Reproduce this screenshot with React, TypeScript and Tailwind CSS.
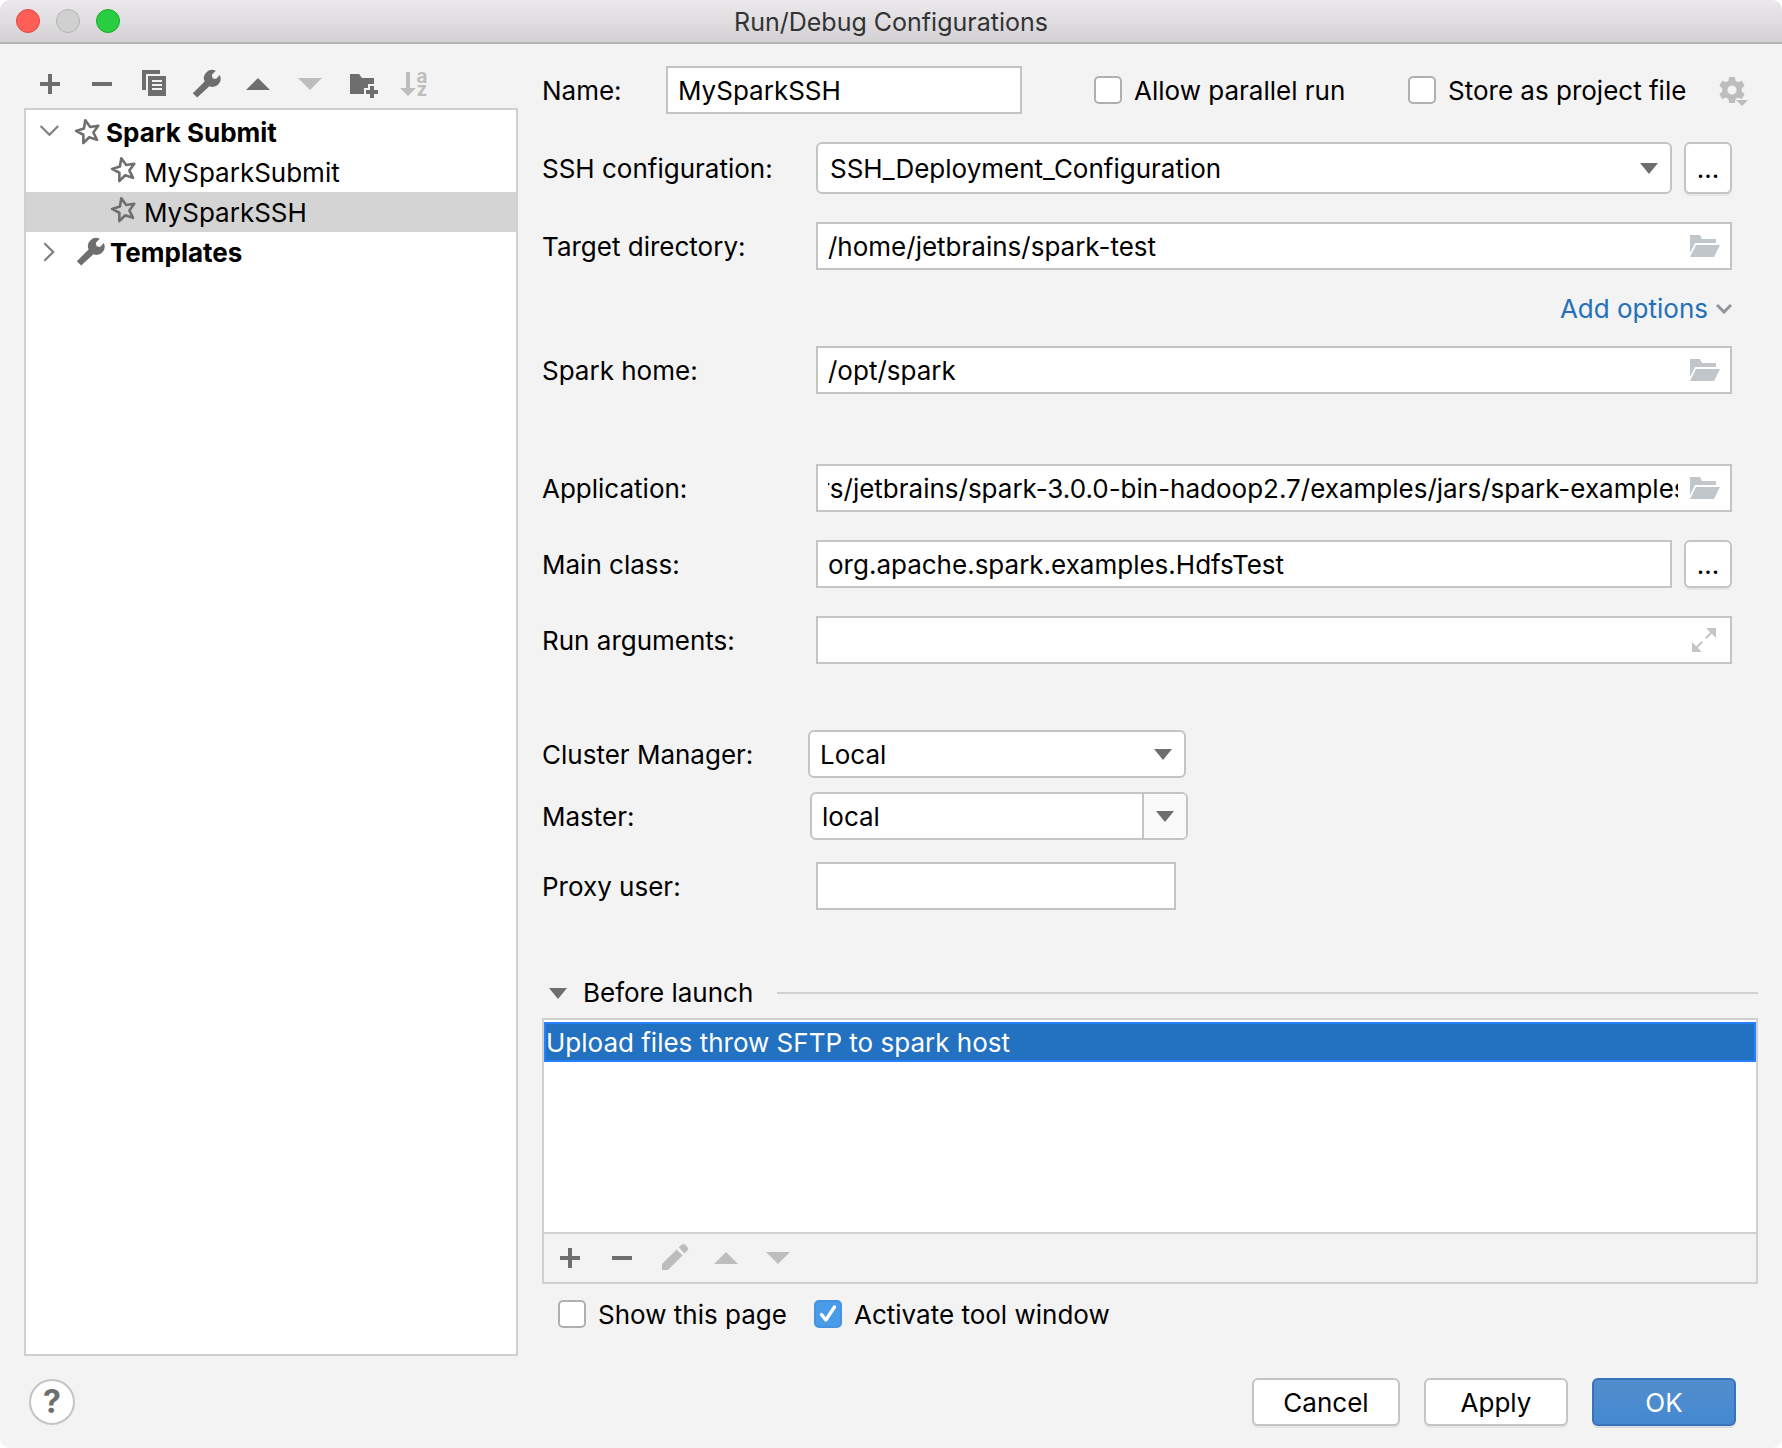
import { useEffect, useRef, useState } from 'react'
import type { ReactNode } from 'react'

interface Config {
  name: string
  ssh: string
  targetDir: string
  sparkHome: string
  application: string
  mainClass: string
  args: string
  manager: string
  master: string
  proxyUser: string
}

const DEFAULT_CONFIG: Config = {
  name: 'MySparkSSH',
  ssh: 'SSH_Deployment_Configuration',
  targetDir: '/home/jetbrains/spark-test',
  sparkHome: '/opt/spark',
  application: 'rs/jetbrains/spark-3.0.0-bin-hadoop2.7/examples/jars/spark-examples_2.12-3.0.0.jar',
  mainClass: 'org.apache.spark.examples.HdfsTest',
  args: '',
  manager: 'Local',
  master: 'local',
  proxyUser: '',
}

// 16-unit icon grid drawn at 32px
const ICONS: Record<string, ReactNode> = {
  add: <path d="M7 3h2v4h4v2H9v4H7V9H3V7h4z" />,
  remove: <path d="M3 7h10v2H3z" />,
  copy: (
    <>
      <path d="M2 1h9v2H4v8H2z" />
      <path fillRule="evenodd" d="M5 4h9v10H5zM7 6v1h5V6zM7 8v1h5V8zM7 10v1h5v-1z" />
    </>
  ),
  wrench: <path d="M12.9 1.4 10.9 3.4 11.3 5.1 13 5.5 14.9 3.5A4.1 4.1 0 0 1 9.7 9.1L3.6 14.8 1.4 12.6 7.3 6.7A4.1 4.1 0 0 1 12.9 1.4z" />,
  up: <path d="M2 11h12L8 5z" />,
  down: <path d="M2 5h12l-6 6z" />,
  folderAdd: (
    <>
      <path d="M2 3h4.5L8 5h6v3h-3v2H9v3H2z" />
      <path d="M12 9h2v2h2v2h-2v2h-2v-2h-2v-2h2z" />
    </>
  ),
  sort: (
    <>
      <path d="M4 2h2v8h3l-4 4-4-4h3z" />
      <text fontSize="9.4" fontWeight="700">
        <tspan x="9.2" y="7.3">a</tspan>
        <tspan x="9.3" y="14">z</tspan>
      </text>
    </>
  ),
  pencil: (
    <>
      <path d="M2 14v-3l7.3-7.3 3 3L5 14z" />
      <path d="M10.4 2.8l1.4-1.4a1.3 1.3 0 0 1 1.8 0l1.1 1.1a1.3 1.3 0 0 1 0 1.8l-1.4 1.4z" />
    </>
  ),
  star: (
    <path
      fill="none" stroke="currentColor" strokeWidth="1.3" strokeLinejoin="round" transform="rotate(-4 8 8)"
      d="M7.06 2.07 9.25 5.6 13.35 5.28 10.66 8.42 12.24 12.24 8.42 10.66 5.28 13.35 5.6 9.22 2.07 7.06 6.1 6.1z"
    />
  ),
  expanded: <path fill="none" stroke="currentColor" strokeWidth="1.1" d="M3.3 5l4.4 4.4L12.1 5" />,
  collapsed: <path fill="none" stroke="currentColor" strokeWidth="1.1" d="M5.2 3.6 9.6 8l-4.4 4.4" />,
  gear: (
    <>
      <path
        fillRule="evenodd"
        d="M6.6 1.5h2.8l.4 1.9 1.2.7 1.9-.7 1.4 2.4L12.9 7.2v1.5l1.4 1.4-1.4 2.4-1.9-.7-1.2.7-.4 2H6.6l-.4-2-1.2-.7-1.9.7-1.4-2.4 1.4-1.4V7.2L1.7 5.8l1.4-2.4 1.9.7 1.2-.7zM8 5.7a2.3 2.3 0 1 0 0 4.6 2.3 2.3 0 0 0 0-4.6z"
      />
      <path d="M10 13h6l-3 3z" />
    </>
  ),
}

function Icon({ name, className = 'text-[#6e6e6e]' }: { name: string; className?: string }) {
  return (
    <svg viewBox="0 0 16 16" fill="currentColor" className={`size-8 shrink-0 overflow-visible ${className}`} aria-hidden="true">
      {ICONS[name]}
    </svg>
  )
}

function ToolButton({ icon, label, disabled }: { icon: string; label: string; disabled?: boolean }) {
  return (
    <button type="button" aria-label={label} disabled={disabled}>
      <Icon name={icon} className={disabled ? 'text-[#bdbdbd]' : 'text-[#6e6e6e]'} />
    </button>
  )
}

function Triangle() {
  return (
    <svg viewBox="0 0 18 11" fill="#6e6e6e" className="w-[18px] shrink-0" aria-hidden="true">
      <path d="M0 0h18L9 11z" />
    </svg>
  )
}

function FolderIcon() {
  return (
    <svg viewBox="0 0 30 22" fill="#c1c6ca" className="w-[30px]" aria-hidden="true">
      <path d="M0 0h10l2 4h14v4H5L0 18z" />
      <path d="M6 10h24l-6 12H0z" />
    </svg>
  )
}

function ExpandIcon() {
  return (
    <svg viewBox="0 0 24 24" fill="#c1c6ca" stroke="#c1c6ca" className="mr-1 w-6" aria-hidden="true">
      <path stroke="none" d="M14 0h10v10zM0 14v10h10z" />
      <path strokeWidth="2" d="M13.7 10.3 20 4M10.3 13.7 4 20" />
    </svg>
  )
}

function Checkbox({ label, checked, onChange }: { label: string; checked: boolean; onChange: (v: boolean) => void }) {
  return (
    <label className="flex items-center gap-3 whitespace-nowrap">
      <span className="relative size-7 shrink-0">
        <input
          type="checkbox"
          checked={checked}
          onChange={e => onChange(e.target.checked)}
          className="block size-7 appearance-none rounded-[5px] border-2 border-[#b0b0b0] bg-white checked:border-[#4593e0] checked:bg-[#4a9be8]"
        />
        {checked && (
          <svg viewBox="0 0 28 28" fill="none" stroke="#fff" strokeWidth="3.4" strokeLinecap="round" strokeLinejoin="round"
            className="pointer-events-none absolute inset-0" aria-hidden="true">
            <path d="M7.5 14.5l4.3 5.5L20.5 7" />
          </svg>
        )}
      </span>
      <span className="pt-[2px]">{label}</span>
    </label>
  )
}

function Row({ id, label, labelWidth = 'w-[274px]', className = '', children }: {
  id: string; label: string; labelWidth?: string; className?: string; children: ReactNode
}) {
  return (
    <div className={`flex items-center pr-[26px] ${className}`}>
      <label htmlFor={id} className={`shrink-0 pt-[2px] whitespace-nowrap ${labelWidth}`}>{label}</label>
      {children}
    </div>
  )
}

const boxClass = 'h-12 border-2 border-[#c4c4c4] bg-white px-[10px] outline-none'
const buttonClass = 'h-12 rounded-md border-2 border-[#c4c4c4] bg-white pt-[2px] shadow-[0_2px_0_#e6e6e6]'

export default function App() {
  const [config, setConfig] = useState<Config>(DEFAULT_CONFIG)
  const [parallel, setParallel] = useState(false)
  const [store, setStore] = useState(false)
  const [showPage, setShowPage] = useState(false)
  const [activate, setActivate] = useState(true)
  const appRef = useRef<HTMLInputElement>(null)

  const set = (key: keyof Config) => (e: { target: { value: string } }) =>
    setConfig(c => ({ ...c, [key]: e.target.value }))

  // Long jar path is kept scrolled past its first letter
  useEffect(() => {
    if (appRef.current) appRef.current.scrollLeft = 8
  }, [])

  const pathField = (id: string, key: keyof Config, icon: ReactNode, label: string) => (
    <div className={`flex min-w-0 flex-1 items-center gap-3 ${boxClass}`}>
      <input id={id} ref={key === 'application' ? appRef : undefined} type="text" value={config[key]} onChange={set(key)}
        className="min-w-0 flex-1 pt-[2px] outline-none" />
      <button type="button" aria-label={label}>{icon}</button>
    </div>
  )

  return (
    <div className="min-h-screen bg-white font-['Inter','Liberation_Sans',sans-serif] text-[26px] leading-8 text-black">
      <div className="flex min-h-screen flex-col overflow-hidden rounded-[10px] bg-[#f3f3f3]">
        {/* Title bar */}
        <header className="relative flex h-11 shrink-0 items-center justify-center border-b-2 border-[#b4b2b4] bg-linear-to-b from-[#ebe9ec] to-[#d3d1d4]">
          <div className="absolute left-4 flex gap-4">
            <button type="button" aria-label="Close" className="size-6 rounded-full border border-[#e2463f] bg-[#ff5f57]" />
            <button type="button" aria-label="Minimize" className="size-6 rounded-full border border-[#b5b4b5] bg-[#d1d0d1]" />
            <button type="button" aria-label="Zoom" className="size-6 rounded-full border border-[#1aab29] bg-[#28cd41]" />
          </div>
          <h1 className="pt-[2px] text-[25px] text-[#333]">Run/Debug Configurations</h1>
        </header>

        <div className="flex flex-1 px-6">
          {/* Configuration tree */}
          <aside className="flex w-[494px] shrink-0 flex-col pt-6">
            <div className="flex gap-5 pb-2 pl-[10px]">
              <ToolButton icon="add" label="Add" />
              <ToolButton icon="remove" label="Remove" />
              <ToolButton icon="copy" label="Copy" />
              <ToolButton icon="wrench" label="Edit templates" />
              <ToolButton icon="up" label="Move up" />
              <ToolButton icon="down" label="Move down" disabled />
              <ToolButton icon="folderAdd" label="New folder" />
              <ToolButton icon="sort" label="Sort" disabled />
            </div>
            <ul className="flex-1 border-2 border-[#d0d0d0] bg-white pt-[2px]">
              <li className="flex h-10 items-center gap-[2px] pl-2 font-bold">
                <Icon name="expanded" className="mr-1 text-[#7f7f7f]" />
                <Icon name="star" />
                <span className="pt-[2px]">Spark Submit</span>
              </li>
              <li className="flex h-10 items-center gap-1 pl-[82px]">
                <Icon name="star" className="mb-1 text-[#6e6e6e]" />
                <span className="pt-[2px]">MySparkSubmit</span>
              </li>
              <li className="flex h-10 items-center gap-1 bg-[#d4d4d4] pl-[82px]">
                <Icon name="star" className="mb-1 text-[#6e6e6e]" />
                <span className="pt-[2px]">MySparkSSH</span>
              </li>
              <li className="flex h-10 items-center gap-1 pl-2 font-bold">
                <Icon name="collapsed" className="mr-1 text-[#7f7f7f]" />
                <Icon name="wrench" />
                <span className="pt-[2px]">Templates</span>
              </li>
            </ul>
          </aside>

          <main className="ml-6 flex min-w-0 flex-1 flex-col pt-[22px]">
            <div className="flex items-center pr-[10px]">
              <label htmlFor="name" className="w-[124px] shrink-0 pt-[2px]">Name:</label>
              <input id="name" type="text" value={config.name} onChange={set('name')} className={`w-[356px] ${boxClass}`} />
              <div className="ml-auto flex items-center">
                <div className="w-[314px]"><Checkbox label="Allow parallel run" checked={parallel} onChange={setParallel} /></div>
                <div className="w-[308px]"><Checkbox label="Store as project file" checked={store} onChange={setStore} /></div>
                <button type="button" aria-label="Storage settings"><Icon name="gear" className="text-[#bdbdbd]" /></button>
              </div>
            </div>

            <Row id="ssh" label="SSH configuration:" className="mt-7">
              <div className="relative min-w-0 flex-1">
                <select id="ssh" value={config.ssh} onChange={set('ssh')}
                  className="h-[52px] w-full appearance-none rounded-md border-2 border-[#c4c4c4] bg-white px-3 pt-[2px] outline-none">
                  <option>SSH_Deployment_Configuration</option>
                </select>
                <span className="pointer-events-none absolute inset-y-0 right-[14px] flex items-center"><Triangle /></span>
              </div>
              <button type="button" aria-label="Edit SSH configurations" className="ml-3 h-[52px] w-12 rounded-md border-2 border-[#c4c4c4] bg-white pt-[2px] shadow-[0_2px_0_#e6e6e6]">...</button>
            </Row>

            <Row id="target" label="Target directory:" className="mt-7">
              {pathField('target', 'targetDir', <FolderIcon />, 'Browse target directory')}
            </Row>

            <div className="flex h-[76px] items-center justify-end pt-[2px] pr-[26px]">
              <button type="button" className="flex items-center gap-2 text-[#2470b8]">
                Add options
                <svg viewBox="0 0 16 10" fill="none" stroke="#8f979d" strokeWidth="3" className="w-4" aria-hidden="true">
                  <path d="M1 1l7 7 7-7" />
                </svg>
              </button>
            </div>

            <Row id="home" label="Spark home:">
              {pathField('home', 'sparkHome', <FolderIcon />, 'Browse Spark home')}
            </Row>

            <Row id="application" label="Application:" className="mt-[70px]">
              {pathField('application', 'application', <FolderIcon />, 'Browse application')}
            </Row>

            <Row id="main-class" label="Main class:" className="mt-7">
              <input id="main-class" type="text" value={config.mainClass} onChange={set('mainClass')} className={`min-w-0 flex-1 ${boxClass}`} />
              <button type="button" aria-label="Choose main class" className={`ml-3 w-12 ${buttonClass}`}>...</button>
            </Row>

            <Row id="args" label="Run arguments:" className="mt-7">
              {pathField('args', 'args', <ExpandIcon />, 'Expand')}
            </Row>

            <Row id="manager" label="Cluster Manager:" labelWidth="w-[266px]" className="mt-[66px]">
              <div className="relative w-[378px]">
                <select id="manager" value={config.manager} onChange={set('manager')} className={`w-full appearance-none rounded-md pt-[2px] ${boxClass}`}>
                  <option>Local</option>
                </select>
                <span className="pointer-events-none absolute inset-y-0 right-[14px] flex items-center"><Triangle /></span>
              </div>
            </Row>

            <Row id="master" label="Master:" labelWidth="w-[268px]" className="mt-[14px]">
              <div className="flex h-12 w-[378px] overflow-hidden rounded-md border-2 border-[#c4c4c4] bg-white">
                <input id="master" type="text" value={config.master} onChange={set('master')} className="min-w-0 flex-1 px-[10px] pt-[2px] outline-none" />
                <button type="button" aria-label="Choose master" className="flex w-11 items-center justify-center border-l-2 border-[#c4c4c4] bg-[#fafafa]">
                  <Triangle />
                </button>
              </div>
            </Row>

            <Row id="proxy" label="Proxy user:" className="mt-[22px]">
              <input id="proxy" type="text" value={config.proxyUser} onChange={set('proxyUser')} className={`w-[360px] ${boxClass}`} />
            </Row>

            {/* Before launch */}
            <div className="mt-[67px] mb-[9px] flex items-center gap-6 pl-[7px]">
              <button type="button" aria-expanded="true" className="flex items-center gap-4">
                <Triangle />
                Before launch
              </button>
              <div className="h-[2px] flex-1 bg-[#d0d0d0]" />
            </div>
            <div className="flex flex-1 flex-col border-2 border-[#d0d0d0]">
              <ul className="flex-1 bg-white pt-[2px]">
                <li className="h-10 border-2 border-[#2680ff] bg-[#2371c1] pt-[3px] text-white">Upload files throw SFTP to spark host</li>
              </ul>
              <div className="flex h-[50px] items-center gap-5 border-t-2 border-[#d0d0d0] pl-[10px]">
                <ToolButton icon="add" label="Add task" />
                <ToolButton icon="remove" label="Remove task" />
                <ToolButton icon="pencil" label="Edit task" disabled />
                <ToolButton icon="up" label="Move task up" disabled />
                <ToolButton icon="down" label="Move task down" disabled />
              </div>
            </div>
            <div className="mt-[13px] mb-[25px] flex pl-4">
              <div className="w-[256px]"><Checkbox label="Show this page" checked={showPage} onChange={setShowPage} /></div>
              <Checkbox label="Activate tool window" checked={activate} onChange={setActivate} />
            </div>
          </main>
        </div>

        {/* Actions */}
        <footer className="flex items-center gap-6 py-[22px] pr-[46px] pl-[29px]">
          <button type="button" aria-label="Help" className="mr-auto size-[46px] rounded-full border-2 border-[#c4c4c4] bg-white text-[32px] font-bold text-[#6e6e6e]">?</button>
          <button type="button" className={`w-[148px] ${buttonClass}`}>Cancel</button>
          <button type="button" className={`w-[144px] ${buttonClass}`}>Apply</button>
          <button type="button" className="h-12 w-[144px] rounded-md border-2 border-[#3574ba] bg-linear-to-b from-[#528dcc] to-[#4589d2] pt-[2px] text-white shadow-[0_2px_0_#dcdcdc]">OK</button>
        </footer>
      </div>
    </div>
  )
}
